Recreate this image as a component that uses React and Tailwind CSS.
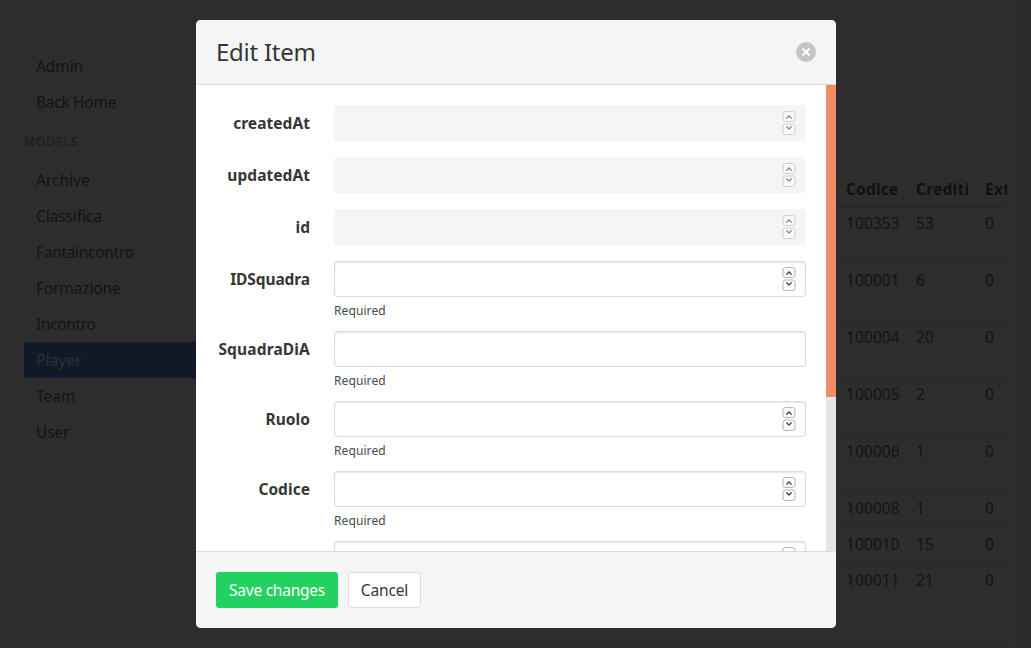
import React from "react";

const models = [
  { label: "Archive", tracking: "tracking-[0.05px]" },
  { label: "Classifica", tracking: "tracking-[-0.1px]" },
  { label: "Fantaincontro", tracking: "tracking-[-0.3px]" },
  { label: "Formazione", tracking: "tracking-[-0.15px]" },
  { label: "Incontro", tracking: "tracking-[-0.35px]" },
  { label: "Player", tracking: "tracking-[0.05px]" },
  { label: "Team", tracking: "" },
  { label: "User", tracking: "tracking-[-0.1px]" },
];

const rows = [
  { code: "100353", credits: "53", tall: true },
  { code: "100001", credits: "6", tall: true },
  { code: "100004", credits: "20", tall: true },
  { code: "100005", credits: "2", tall: true },
  { code: "100006", credits: "1", tall: true },
  { code: "100008", credits: "1" },
  { code: "100010", credits: "15" },
  { code: "100011", credits: "21", last: true },
];

const fields = [
  { name: "createdAt", disabled: true, stepper: true },
  { name: "updatedAt", disabled: true, stepper: true },
  { name: "id", disabled: true, stepper: true },
  { name: "IDSquadra", stepper: true, tracking: "tracking-[-0.1px]" },
  { name: "SquadraDiA", tracking: "tracking-[0.15px]" },
  { name: "Ruolo", stepper: true },
  { name: "Codice", stepper: true },
  { name: "", stepper: true },
];

function MenuItem({ label, active, tracking = "" }) {
  return (
    <li className={`flex h-9 items-center rounded-[2px] px-3 ${tracking} ${active ? "bg-[#3273dc] text-white" : "text-[#4a4a4a]"}`}>
      {label}
    </li>
  );
}

function Stepper({ faded }) {
  return (
    <svg className={`mr-[9px] h-[26px] w-[14px] ${faded ? "opacity-60" : ""}`} viewBox="0 0 14 26" fill="none">
      <rect x="1" y="1.5" width="12" height="10" rx="2.5" fill="#fcfcfc" stroke="#b4b4b4" />
      <rect x="1" y="14" width="12" height="10.5" rx="2.5" fill="#fcfcfc" stroke="#b4b4b4" />
      <path d="M4.3 8.6 L7 6 L9.7 8.6" stroke="#3c3c3c" strokeWidth="1.3" />
      <path d="M4.3 16.4 L7 19 L9.7 16.4" stroke="#3c3c3c" strokeWidth="1.3" />
    </svg>
  );
}

function Field({ field }) {
  return (
    <div className="flex shrink-0">
      <div className="mr-6 flex h-9 w-[94px] shrink-0 items-center justify-end whitespace-nowrap font-bold text-[#363636]">
        <span className={field.tracking || "tracking-[0.05px]"}>{field.name}</span>
      </div>
      <div className="flex-1">
        <div
          className={`flex h-9 items-center justify-end rounded-[3px] border ${
            field.disabled ? "border-[#f5f5f5] bg-[#f5f5f5]" : "border-[#dbdbdb] bg-white shadow-[inset_0_1px_2px_rgba(10,10,10,0.1)]"
          }`}
        >
          {field.stepper && <Stepper faded={field.disabled} />}
        </div>
        {!field.disabled && (
          <p className="mt-1 h-[14px] text-[12px] leading-[19px] tracking-[0.1px] text-[#4a4a4a]">
            {field.name && "Required"}
          </p>
        )}
      </div>
    </div>
  );
}

function Backdrop() {
  return (
    <div className="flex h-full bg-white pl-6 pr-6">
      <aside className="w-[312px] shrink-0 pt-12">
        <ul>
          <MenuItem label="Admin" tracking="tracking-[-0.1px]" />
          <MenuItem label="Back Home" tracking="tracking-[-0.28px]" />
        </ul>
        <p className="mt-[13px] mb-[12px] text-[12px] leading-[17px] tracking-[1px] text-[#7a7a7a]">MODELS</p>
        <ul>
          {models.map((m) => (
            <MenuItem key={m.label} label={m.label} tracking={m.tracking} active={m.label === "Player"} />
          ))}
        </ul>
      </aside>
      <main className="flex min-w-0 flex-1 flex-col pl-6">
        <div className="mt-[172px] h-[424px] overflow-hidden">
          <div className="flex h-[35px] items-center border-b-2 border-[#dbdbdb] pl-[486px] font-bold text-[#363636]">
            <span className="w-[70px] shrink-0 tracking-[0.15px]">Codice</span>
            <span className="w-[69px] shrink-0 tracking-[0.25px]">Crediti</span>
            <span className="tracking-[0.3px]">Extra</span>
          </div>
          {rows.map((r) => (
            <div
              key={r.code}
              className={`flex pl-[486px] pt-1 leading-6 text-[#4a4a4a] ${r.tall ? "h-[57px]" : "h-9"} ${r.last ? "" : "border-b border-[#dbdbdb]"}`}
            >
              <span className="w-[70px] shrink-0 tracking-[0.1px]">{r.code}</span>
              <span className="w-[69px] shrink-0">{r.credits}</span>
              <span>0</span>
            </div>
          ))}
        </div>
        <div className="mt-12 border-t border-[#dbdbdb]" />
      </main>
    </div>
  );
}

export default function App() {
  return (
    <div className="relative h-[648px] w-[1031px] overflow-hidden font-['Noto_Sans',sans-serif] text-[15.5px] leading-6">
      <Backdrop />
      <div className="absolute inset-0 flex justify-center bg-[#0a0a0a]/86 py-5 pl-px">
        <section className="flex h-[608px] w-[640px] flex-col overflow-hidden rounded-[5px] bg-white">
          <header className="flex h-[65px] shrink-0 items-center justify-between border-b border-[#dbdbdb] bg-[#f5f5f5] px-5">
            <h1 className="text-[24px] leading-6 tracking-[-0.25px] text-[#363636]">Edit Item</h1>
            <svg className="size-5" viewBox="0 0 20 20">
              <circle cx="10" cy="10" r="10" fill="#c5c5c5" />
              <path d="M6.5 6.5 L13.5 13.5 M13.5 6.5 L6.5 13.5" stroke="#fff" strokeWidth="2.1" />
            </svg>
          </header>
          <div className="flex min-h-0 flex-1">
            <div className="flex min-w-0 flex-1 flex-col gap-4 overflow-hidden p-5">
              {fields.map((f, i) => (
                <Field key={i} field={f} />
              ))}
            </div>
            <div className="w-2.5 bg-[#e6e6e6]">
              <div className="h-[312px] bg-[#f08d66]" />
            </div>
          </div>
          <footer className="flex h-[77px] shrink-0 items-center gap-2.5 border-t border-[#dbdbdb] bg-[#f5f5f5] px-5">
            <button className="h-9 w-[122px] rounded-[3px] bg-[#23d160] tracking-[-0.25px] text-white">Save changes</button>
            <button className="h-9 w-[73px] rounded-[3px] border border-[#dbdbdb] bg-white tracking-[-0.15px] text-[#363636]">Cancel</button>
          </footer>
        </section>
      </div>
    </div>
  );
}
